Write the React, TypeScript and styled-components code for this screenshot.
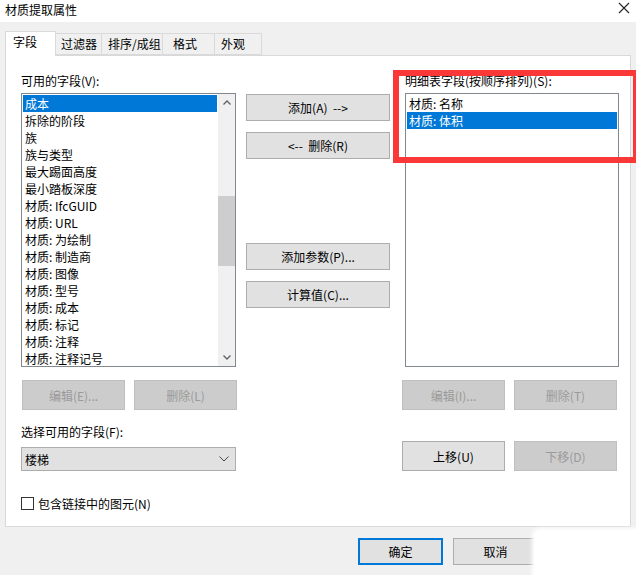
import React from 'react';
import styled, { createGlobalStyle } from 'styled-components';

const GlobalStyle = createGlobalStyle`
    html, body {
        margin:0;
        padding:0;
        background:#f0f0f0;
    }
    * {
        box-sizing:border-box;
    }
`;

const availableFields = [
    '成本',
    '拆除的阶段',
    '族',
    '族与类型',
    '最大踢面高度',
    '最小踏板深度',
    '材质: IfcGUID',
    '材质: URL',
    '材质: 为绘制',
    '材质: 制造商',
    '材质: 图像',
    '材质: 型号',
    '材质: 成本',
    '材质: 标记',
    '材质: 注释',
    '材质: 注释记号',
];

const scheduleFields = ['材质: 名称', '材质: 体积'];

const tabs = [
    { label: '字段', width: 51, pad: 7 },
    { label: '过滤器', width: 46, pad: 5 },
    { label: '排序/成组', width: 61, pad: 6 },
    { label: '格式', width: 52, pad: 10 },
    { label: '外观', width: 47, pad: 6 },
];

// 材质提取属性 对话框
const App = () => {
    return (
        <>
            <GlobalStyle />
            <Window>
                <TitleBar>
                    <Title>材质提取属性</Title>
                    <CloseIcon width="12" height="12" viewBox="0 0 12 12">
                        <path d="M1 1 L11 11 M11 1 L1 11" stroke="#222" strokeWidth="1.1" />
                    </CloseIcon>
                </TitleBar>

                <TabBar>
                    {tabs.map((t, i) => (
                        <Tab key={t.label} active={i === 0} w={t.width} pad={t.pad}>
                            {t.label}
                        </Tab>
                    ))}
                </TabBar>

                <Panel>
                    <LeftColumn>
                        <Label>可用的字段(V):</Label>
                        <ListBox>
                            <ListItems>
                                {availableFields.map((f, i) => (
                                    <ListItem key={f} selected={i === 0}>{f}</ListItem>
                                ))}
                            </ListItems>
                            <ScrollBar>
                                <Arrow viewBox="0 0 8 5" width="8" height="5">
                                    <path d="M0.5 4.5 L4 1 L7.5 4.5" fill="none" stroke="#606060" strokeWidth="1.3" />
                                </Arrow>
                                <Track>
                                    <Thumb />
                                </Track>
                                <Arrow viewBox="0 0 8 5" width="8" height="5">
                                    <path d="M0.5 0.5 L4 4 L7.5 0.5" fill="none" stroke="#606060" strokeWidth="1.3" />
                                </Arrow>
                            </ScrollBar>
                        </ListBox>
                        <ButtonRow>
                            <Button disabled>编辑(E)...</Button>
                            <Button disabled>删除(L)</Button>
                        </ButtonRow>
                        <SubLabel>选择可用的字段(F):</SubLabel>
                        <Select>
                            <span>楼梯</span>
                            <svg width="10" height="6" viewBox="0 0 10 6">
                                <path d="M0.5 0.5 L5 5 L9.5 0.5" fill="none" stroke="#444" strokeWidth="1" />
                            </svg>
                        </Select>
                        <CheckRow>
                            <CheckBox />
                            <span>包含链接中的图元(N)</span>
                        </CheckRow>
                    </LeftColumn>

                    <MiddleColumn>
                        <MoveButton>添加(A)&nbsp;&nbsp;--&gt;</MoveButton>
                        <MoveButton>&lt;--&nbsp;&nbsp;删除(R)</MoveButton>
                        <MoveButton spaced>添加参数(P)...</MoveButton>
                        <MoveButton>计算值(C)...</MoveButton>
                    </MiddleColumn>

                    <RightColumn>
                        <Label>明细表字段(按顺序排列)(S):</Label>
                        <ListBox>
                            <ListItems>
                                {scheduleFields.map((f, i) => (
                                    <ListItem key={f} selected={i === 1}>{f}</ListItem>
                                ))}
                            </ListItems>
                        </ListBox>
                        <ButtonRow shift={-3}>
                            <Button disabled>编辑(I)...</Button>
                            <Button disabled>删除(T)</Button>
                        </ButtonRow>
                        <ButtonRow gap={31} shift={-3}>
                            <Button>上移(U)</Button>
                            <Button disabled>下移(D)</Button>
                        </ButtonRow>
                    </RightColumn>
                </Panel>

                <Footer>
                    <FooterButton primary>确定</FooterButton>
                    <FooterButton>取消</FooterButton>
                </Footer>

                <Highlight />
                <Smudge />
            </Window>
        </>
    );
};

const Window = styled.div`
    position:relative;
    width:636px;
    height:575px;
    overflow:hidden;
    background:#f0f0f0;
    font-family:"Noto Sans CJK SC", "Liberation Sans", sans-serif;
    font-size:12px;
    color:#000;
`;

const TitleBar = styled.div`
    height:22px;
    background:#fff;
    display:flex;
    align-items:center;
    justify-content:space-between;
    padding:0 6px 4px 5px;
`;

const Title = styled.span`
    font-size:12px;
    color:#000;
`;

const CloseIcon = styled.svg`
    margin-top:-2px;
`;

const TabBar = styled.div`
    display:flex;
    align-items:flex-end;
    height:24px;
    margin:9px 0 0 5px;
`;

const Tab = styled.div<{ active?: boolean; w: number; pad: number }>`
    width:${p => p.w}px;
    height:${p => (p.active ? 25 : 22)}px;
    margin-bottom:${p => (p.active ? -1 : 0)}px;
    background:${p => (p.active ? '#fff' : '#f0f0f0')};
    border:1px solid #d9d9d9;
    border-bottom:${p => (p.active ? 'none' : '1px solid #d9d9d9')};
    border-left:${p => (p.active ? '1px solid #d9d9d9' : 'none')};
    padding:2px 0 0 ${p => p.pad}px;
    line-height:16px;
    white-space:nowrap;
    position:relative;
    z-index:${p => (p.active ? 2 : 1)};
`;

const Panel = styled.div`
    display:flex;
    margin:0 5px;
    height:472px;
    background:#fff;
    border:1px solid #d9d9d9;
    padding:17px 0 0 15px;
`;

const LeftColumn = styled.div`
    width:215px;
    display:flex;
    flex-direction:column;
`;

const MiddleColumn = styled.div`
    width:144px;
    margin-left:10px;
    padding-top:21px;
    display:flex;
    flex-direction:column;
    gap:11px;
`;

const RightColumn = styled.div`
    width:214px;
    margin-left:15px;
    display:flex;
    flex-direction:column;
`;

const Label = styled.div`
    height:16px;
    line-height:16px;
    margin-bottom:4px;
    white-space:nowrap;
`;

const SubLabel = styled.div`
    height:16px;
    line-height:16px;
    margin-top:14px;
`;

const ListBox = styled.div`
    height:274px;
    border:1px solid #828790;
    background:#fff;
    display:flex;
    padding:1px 0 0 1px;
`;

const ListItems = styled.div`
    flex:1;
    display:flex;
    flex-direction:column;
    padding-right:1px;
`;

const ListItem = styled.div<{ selected?: boolean }>`
    height:17px;
    line-height:17px;
    padding-left:2px;
    white-space:nowrap;
    background:${p => (p.selected ? '#0078d7' : 'transparent')};
    color:${p => (p.selected ? '#fff' : '#000')};
`;

const ScrollBar = styled.div`
    width:17px;
    margin-top:-1px;
    background:#f0f0f0;
    display:flex;
    flex-direction:column;
    align-items:center;
`;

const Arrow = styled.svg`
    flex:none;
    margin:6px 0;
`;

const Track = styled.div`
    flex:1;
    width:100%;
    padding-top:85px;
`;

const Thumb = styled.div`
    height:70px;
    width:100%;
    background:#cdcdcd;
`;

const ButtonRow = styled.div<{ gap?: number; shift?: number }>`
    display:flex;
    justify-content:space-between;
    width:215px;
    margin-top:${p => p.gap ?? 13}px;
    margin-left:${p => p.shift ?? 1}px;
`;

const Button = styled.button`
    width:103px;
    height:30px;
    font:inherit;
    color:#000;
    background:#e1e1e1;
    border:1px solid #adadad;
    padding:0;

    &:disabled {
        background:#cccccc;
        border-color:#bfbfbf;
        color:#9a9a9a;
    }
`;

const MoveButton = styled.button<{ spaced?: boolean }>`
    width:144px;
    height:27px;
    font:inherit;
    color:#000;
    background:#e1e1e1;
    border:1px solid #adadad;
    padding:0;
    margin-top:${p => (p.spaced ? 73 : 0)}px;
`;

const Select = styled.div`
    margin-top:7px;
    height:24px;
    background:#e1e1e1;
    border:1px solid #adadad;
    display:flex;
    align-items:center;
    justify-content:space-between;
    padding:0 6px 0 3px;
`;

const CheckRow = styled.div`
    display:flex;
    align-items:center;
    gap:4px;
    margin-top:25px;
    height:15px;
`;

const CheckBox = styled.div`
    width:13px;
    height:13px;
    border:1px solid #333;
    background:#fff;
`;

const Footer = styled.div`
    display:flex;
    justify-content:flex-end;
    gap:10px;
    margin-top:11px;
    padding-right:98px;
`;

const FooterButton = styled.button<{ primary?: boolean }>`
    width:85px;
    height:27px;
    font:inherit;
    color:#000;
    background:#e1e1e1;
    border:${p => (p.primary ? '2px solid #0078d7' : '1px solid #adadad')};
    padding:0;
`;

// 截图上的红色标注框
const Highlight = styled.div`
    position:absolute;
    left:393px;
    top:70px;
    width:246px;
    height:93px;
    border:6px solid #fb3838;
    pointer-events:none;
`;

// 右下角被涂白的区域
const Smudge = styled.div`
    position:absolute;
    left:534px;
    top:530px;
    width:120px;
    height:50px;
    background:#fff;
    border-radius:6px;
    box-shadow:0 0 4px 2px #fff;
`;

export default App;
